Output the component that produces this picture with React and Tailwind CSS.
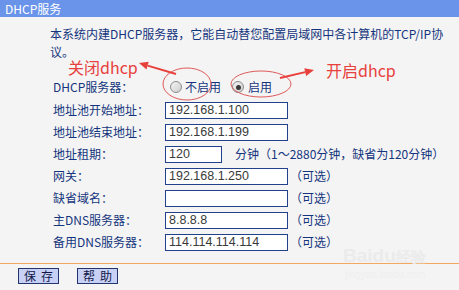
import React from "react";

const CJK = { fontFamily: '"Noto Sans CJK SC", "Liberation Sans", sans-serif' };
const NUM = { fontFamily: '"Liberation Sans", Arial, sans-serif' };

function Radio({ checked }) {
  return (
    <span className="inline-flex w-[12px] h-[12px] rounded-full border border-[#8c8c8c] bg-gradient-to-br from-[#f4f4f4] to-[#cfcfcf] items-center justify-center shrink-0">
      {checked && <span className="w-[5px] h-[5px] rounded-full bg-[#3a3a3a]" />}
    </span>
  );
}

function Field({ label, value, width = "w-[123px]", suffix, suffixClass = "ml-[2px]" }) {
  return (
    <div className="flex items-center h-[22px]">
      <div className="w-[112px] shrink-0 text-[#14357d]">{label}</div>
      <div
        className={`${width} h-[17px] border border-[#23418a] bg-white text-[#3a3a3a] text-[12.5px] leading-[15px] pl-[3px] shrink-0`}
        style={NUM}
      >
        {value}
      </div>
      {suffix && <div className={`${suffixClass} text-[#14357d] whitespace-nowrap`}>{suffix}</div>}
    </div>
  );
}

function Btn({ a, b }) {
  return (
    <button className="w-[41px] h-[16px] border border-[#23346e] bg-[#c8d0f6] text-[#10184a] text-[12px] leading-[14px] flex items-center justify-center gap-[5px] whitespace-nowrap">
      <span>{a}</span>
      <span>{b}</span>
    </button>
  );
}

export default function App() {
  return (
    <div className="relative w-[459px] h-[290px] bg-[#f4f4f4] overflow-hidden text-[12px]" style={CJK}>
      <div className="h-[17px] bg-[#6a94ea] text-white text-[12px] leading-[17px] pl-[5px]">DHCP服务</div>

      <div className="pl-[50px] pt-[8px] text-[#14357d] leading-[18px]">
        <div className="whitespace-nowrap">本系统内建DHCP服务器，它能自动替您配置局域网中各计算机的TCP/IP协</div>
        <div>议。</div>
      </div>

      <div className="pl-[53px] mt-[14px]">
        <div className="flex items-center h-[24px]">
          <div className="w-[112px] shrink-0 text-[#14357d]">DHCP服务器：</div>
          <div className="flex items-center ml-[5px]">
            <Radio />
            <span className="ml-[3px] text-[#14357d]">不启用</span>
          </div>
          <div className="flex items-center ml-[11px]">
            <Radio checked />
            <span className="ml-[4px] text-[#14357d]">启用</span>
          </div>
        </div>
        <Field label="地址池开始地址：" value="192.168.1.100" />
        <Field label="地址池结束地址：" value="192.168.1.199" />
        <Field label="地址租期：" value="120" width="w-[57px]" suffix="分钟（1～2880分钟，缺省为120分钟）" suffixClass="ml-[13px]" />
        <Field label="网关：" value="192.168.1.250" suffix="（可选）" />
        <Field label="缺省域名：" value="" suffix="（可选）" />
        <Field label="主DNS服务器：" value="8.8.8.8" suffix="（可选）" />
        <Field label="备用DNS服务器：" value="114.114.114.114" suffix="（可选）" />
      </div>

      <div className="mt-[10px] h-[1px] bg-[#f2a85e]" />

      <div className="flex gap-[18px] pl-[18px] mt-[4px]">
        <Btn a="保" b="存" />
        <Btn a="帮" b="助" />
      </div>

      {/* watermark */}
      <div className="absolute left-[343px] top-[246px] text-[#ebebeb] text-[19px] font-bold leading-none pointer-events-none" style={NUM}>
        Baidu<span className="text-[15px]">经验</span>
      </div>
      <div className="absolute left-[345px] top-[270px] text-[#efefef] text-[10px] leading-none pointer-events-none" style={NUM}>
        jingyan.baidu.com
      </div>

      {/* annotations */}
      <svg className="absolute left-0 top-0 pointer-events-none" width="459" height="290" viewBox="0 0 459 290">
        <ellipse cx="187" cy="84" rx="24" ry="16" fill="none" stroke="#e05a5a" strokeWidth="1" />
        <ellipse cx="261" cy="84" rx="30" ry="13" fill="none" stroke="#e05a5a" strokeWidth="1" />
        <line x1="176" y1="74" x2="147.6" y2="65.6" stroke="#e8403c" strokeWidth="2" />
        <polygon points="139,63 148.7,61.8 146.5,69.4" fill="#e8403c" />
        <line x1="280" y1="78" x2="305.2" y2="72.1" stroke="#e8403c" strokeWidth="2" />
        <polygon points="314,70 306.1,76 304.3,68.2" fill="#e8403c" />
      </svg>
      <div className="absolute left-[68px] top-[59px] text-[16px] leading-none text-[#e8403c] whitespace-nowrap">关闭dhcp</div>
      <div className="absolute left-[326px] top-[62px] text-[16px] leading-none text-[#e8403c] whitespace-nowrap">开启dhcp</div>
    </div>
  );
}
